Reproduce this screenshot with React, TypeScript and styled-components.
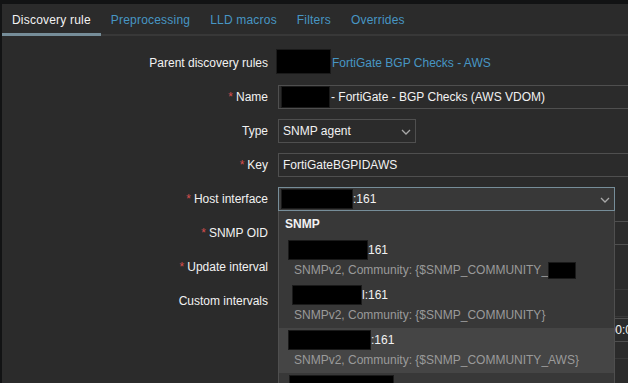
import React from 'react'
import styled, { createGlobalStyle } from 'styled-components'

const GlobalStyle = createGlobalStyle`
    html, body {
        margin: 0;
        background: #121314;
        overflow: hidden;
    }
    body {
        font-family: "Liberation Sans", Arial, sans-serif;
        font-size: 12px;
        color: #f2f2f2;
    }
`;

const Page = styled.div`
    padding: 4px 0 0 2px;
    height: 383px;
    box-sizing: border-box;
`;

const Panel = styled.div`
    background: #2b2b2b;
    width: 1000px;
    height: 100%;
`;

const TabList = styled.div`
    display: flex;
    height: 32px;
    box-shadow: inset 0 -2px 0 #383838;
`;

const Tab = styled.div<{ $active?: boolean }>`
    display: flex;
    align-items: center;
    padding: 0 10px 1px 10px;
    letter-spacing: 0.2px;
    color: ${p => (p.$active ? '#f2f2f2' : '#4796c4')};
    box-shadow: ${p => (p.$active ? 'inset 0 -3px 0 #768d99' : 'none')};
`;

const Form = styled.div`
    display: grid;
    grid-template-columns: 266px 1fr;
    column-gap: 10px;
    row-gap: 10px;
    padding-top: 15px;
`;

const Label = styled.div`
    text-align: right;
    line-height: 24px;
    height: 24px;
    white-space: nowrap;
`;

const Req = styled.span`
    color: #d64e4e;
    margin-right: 3px;
`;

const Field = styled.div`
    position: relative;
    display: flex;
    align-items: center;
    height: 24px;
`;

const Redact = styled.span<{ $w: number; $h: number }>`
    display: inline-block;
    flex: none;
    width: ${p => p.$w}px;
    height: ${p => p.$h}px;
    background: #000;
    border: 1px solid #1a1a1a;
    box-sizing: border-box;
`;

const Link = styled.span`
    color: #4796c4;
    margin-left: 1px;
`;

const InputBox = styled.div<{ $w?: number; $pad?: number }>`
    display: flex;
    align-items: center;
    flex: none;
    box-sizing: border-box;
    height: 24px;
    width: ${p => (p.$w ? `${p.$w}px` : '453px')};
    padding-left: ${p => p.$pad ?? 4}px;
    background: #2b2b2b;
    border: 1px solid #4f4f4f;
    white-space: nowrap;
    overflow: hidden;
`;

const SelectBox = styled.div<{ $w: number; $focus?: boolean }>`
    position: relative;
    display: flex;
    align-items: center;
    box-sizing: border-box;
    height: 24px;
    width: ${p => p.$w}px;
    padding-left: ${p => (p.$focus ? 2 : 4)}px;
    background: ${p => (p.$focus ? '#383838' : '#2b2b2b')};
    border: 1px solid ${p => (p.$focus ? '#768d99' : '#4f4f4f')};
    white-space: nowrap;
`;

const Chevron = styled.svg`
    position: absolute;
    right: 4px;
    top: 9px;
`;

const Dropdown = styled.div`
    position: absolute;
    top: 24px;
    left: 0;
    width: 337px;
    box-sizing: border-box;
    background: #383838;
    border: 1px solid #4f4f4f;
    border-top: none;
    z-index: 2;
`;

const GroupTitle = styled.div`
    font-weight: bold;
    height: 27px;
    line-height: 26px;
    padding-left: 6px;
`;

const Option = styled.div<{ $hover?: boolean }>`
    padding: 4px 0 5px;
    background: ${p => (p.$hover ? '#454545' : 'transparent')};
`;

const OptionMain = styled.div<{ $pad: number }>`
    display: flex;
    align-items: center;
    height: 16px;
    padding-left: ${p => p.$pad}px;
`;

const OptionSub = styled.div`
    display: flex;
    align-items: center;
    height: 16px;
    margin-top: 4px;
    padding-left: 15px;
    color: #9a9a9a;
    white-space: nowrap;
`;

const TableBox = styled.div`
    box-sizing: border-box;
    width: 600px;
    border: 1px solid #383838;
`;

const TableHead = styled.div`
    height: 26px;
    border-bottom: 1px solid #383838;
`;

const TableRow = styled.div`
    height: 40px;
    padding: 1px 0 0 304px;
    display: flex;
    align-items: flex-start;
`;

const ChevronIcon = () => (
    <Chevron width="10" height="6" viewBox="0 0 10 6">
        <polyline points="1,1 5,5 9,1" fill="none" stroke="#a8a8a8" strokeWidth="1.3" />
    </Chevron>
);

const tabs = ['Discovery rule', 'Preprocessing', 'LLD macros', 'Filters', 'Overrides'];

const options = [
    { box: 80, pad: 9, text: '161', sub: 'SNMPv2, Community: {$SNMP_COMMUNITY_', subBox: 28 },
    { box: 70, pad: 13, text: 'l:161', sub: 'SNMPv2, Community: {$SNMP_COMMUNITY}' },
    { box: 83, pad: 9, text: ':161', sub: 'SNMPv2, Community: {$SNMP_COMMUNITY_AWS}', hover: true },
    { box: 105, pad: 10, text: '', sub: '' },
];

const App = () => {
    return (
        <>
            <GlobalStyle />
            <Page>
                <Panel>
                    <TabList>
                        {tabs.map((tab, index) => (
                            <Tab key={index} $active={index === 0}>{tab}</Tab>
                        ))}
                    </TabList>
                    <Form>
                        <Label>Parent discovery rules</Label>
                        <Field>
                            <Redact $w={55} $h={25} style={{ marginLeft: -2, marginTop: -3 }} />
                            <Link>FortiGate BGP Checks - AWS</Link>
                        </Field>

                        <Label><Req>*</Req>Name</Label>
                        <Field>
                            <InputBox $pad={2}>
                                <Redact $w={49} $h={22} />
                                <span style={{ marginLeft: 1 }}>- FortiGate - BGP Checks (AWS VDOM)</span>
                            </InputBox>
                        </Field>

                        <Label>Type</Label>
                        <Field>
                            <SelectBox $w={138}>
                                SNMP agent
                                <ChevronIcon />
                            </SelectBox>
                        </Field>

                        <Label><Req>*</Req>Key</Label>
                        <Field>
                            <InputBox>FortiGateBGPIDAWS</InputBox>
                        </Field>

                        <Label><Req>*</Req>Host interface</Label>
                        <Field>
                            <SelectBox $w={337} $focus>
                                <Redact $w={72} $h={20} />
                                :161
                                <ChevronIcon />
                            </SelectBox>
                            <Dropdown>
                                <GroupTitle>SNMP</GroupTitle>
                                {options.map((opt, idx) => (
                                    <Option key={idx} $hover={opt.hover}>
                                        <OptionMain $pad={opt.pad}>
                                            <Redact $w={opt.box} $h={20} />
                                            {opt.text}
                                        </OptionMain>
                                        <OptionSub>
                                            {opt.sub}
                                            {opt.subBox && <Redact $w={opt.subBox} $h={17} />}
                                        </OptionSub>
                                    </Option>
                                ))}
                            </Dropdown>
                        </Field>

                        <Label><Req>*</Req>SNMP OID</Label>
                        <Field>
                            <InputBox />
                        </Field>

                        <Label><Req>*</Req>Update interval</Label>
                        <Field>
                            <InputBox $w={72} />
                        </Field>

                        <Label>Custom intervals</Label>
                        <div>
                            <TableBox>
                                <TableHead />
                                <TableRow>
                                    <InputBox $w={150}>1-7,00:00-24:00</InputBox>
                                </TableRow>
                            </TableBox>
                        </div>
                    </Form>
                </Panel>
            </Page>
        </>
    );
};

export default App;
